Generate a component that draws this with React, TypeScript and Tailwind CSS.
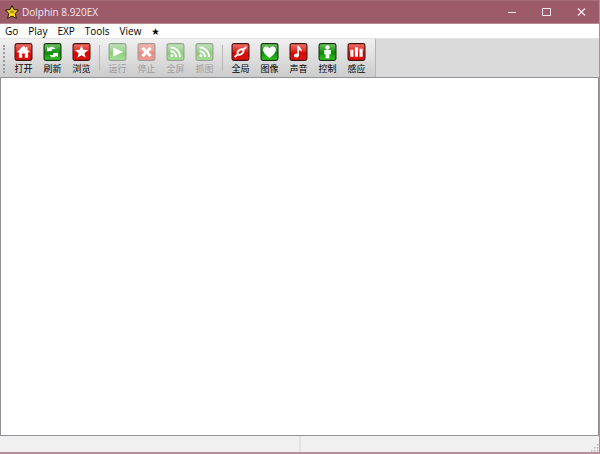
import { useState } from "react";
import type { ReactNode } from "react";

type Glyph =
  | "home"
  | "refresh"
  | "star"
  | "play"
  | "cross"
  | "feed"
  | "planet"
  | "heart"
  | "note"
  | "person"
  | "bars";

interface Tool {
  label: string;
  glyph: Glyph;
  color: "red" | "green";
  disabled?: boolean;
}

const MENUS = ["Go", "Play", "EXP", "Tools", "View"];

const TOOL_GROUPS: Tool[][] = [
  [
    { label: "打开", glyph: "home", color: "red" },
    { label: "刷新", glyph: "refresh", color: "green" },
    { label: "浏览", glyph: "star", color: "red" },
  ],
  [
    { label: "运行", glyph: "play", color: "green", disabled: true },
    { label: "停止", glyph: "cross", color: "red", disabled: true },
    { label: "全屏", glyph: "feed", color: "green", disabled: true },
    { label: "抓图", glyph: "feed", color: "green", disabled: true },
  ],
  [
    { label: "全局", glyph: "planet", color: "red" },
    { label: "图像", glyph: "heart", color: "green" },
    { label: "声音", glyph: "note", color: "red" },
    { label: "控制", glyph: "person", color: "green" },
    { label: "感应", glyph: "bars", color: "red" },
  ],
];

// Top, middle, lower middle and bottom of each tile, then its outline
const TILE_COLORS = {
  red: ["#f0766c", "#e3251f", "#d80500", "#e01410", "#4a1210"],
  green: ["#7cc46c", "#1d9418", "#088a04", "#3cc828", "#12380e"],
  redOff: ["#f2b4ae", "#ee9a94", "#ec8882", "#f09a96", "#a89694"],
  greenOff: ["#c4e2bc", "#9cd090", "#8ccc7c", "#a8e298", "#94a490"],
};

// White glyphs on a 19x19 tile
const GLYPHS: Record<Glyph, ReactNode> = {
  home: <path d="M9.5 3 2.300 9.800h2.300V15.500h3.500v-4.300h2.800v4.300h3.500V9.800h2.300L13.700 7V4.200H12v1.200z" />,
  refresh: (
    <>
      <path d="M3.500 8.800 4 4l1.600 1.200C8.400 3 11.300 3.600 12.600 6.600 10.800 5.900 9.300 6.200 8 7.200l1.500 1.300z" />
      <path d="m15.500 10.200-.5 4.800-1.600-1.200c-2.800 2.200-5.700 1.600-7-1.400 1.800.7 3.300.4 4.600-.6l-1.500-1.300z" />
    </>
  ),
  star: <path d="m9.5 2.500 1.900 4.700 5.100.3-3.900 3.200 1.300 4.900-4.400-2.800-4.400 2.800 1.300-4.900-3.900-3.200 5.100-.3z" />,
  play: <path d="M5 4.800v9.400l10.500-4.700z" />,
  cross: <path d="m4 6.400 2.400-2.400 3.100 3.100L12.600 4 15 6.400l-3.100 3.100 3.100 3.100-2.400 2.400-3.100-3.100L6.400 15 4 12.600l3.100-3.100z" />,
  feed: (
    <>
      <circle cx="5.800" cy="13.300" r="1.600" />
      <path
        d="M4.300 8.800a6 6 0 0 1 6 6M4.300 4.800a10 10 0 0 1 10 10"
        fill="none"
        stroke="#fff"
        strokeWidth="2.200"
      />
    </>
  ),
  planet: (
    <g fill="none" stroke="#fff" strokeWidth="2" transform="rotate(-38 9.5 9.5)">
      <ellipse cx="9.5" cy="9.5" rx="3.500" ry="2.300" />
      <path d="M1.500 9.800H6M13 9.200h4.500" />
    </g>
  ),
  heart: (
    <path d="M9.5 15.800C6.300 13 2.800 10.500 2.800 7c0-3.500 4.700-4.700 6.700-1.400C11.500 2.300 16.200 3.500 16.200 7c0 3.500-3.500 6-6.700 8.800z" />
  ),
  note: (
    <>
      <ellipse cx="7.300" cy="13.200" rx="2.600" ry="2" />
      <path d="M8.300 3H10c.3 2 3.500 2.800 3 6.500-.7-1.500-1.700-2-3-2.100v6H8.300z" />
    </>
  ),
  person: (
    <>
      <circle cx="9.500" cy="4.800" r="2.300" />
      <path d="M6 7.500h7v4.300h-1.500V16h-4v-4.200H6z" />
    </>
  ),
  bars: <path d="M3 7h3.300v7.500H3zM7.800 4.500h3.300v10H7.800zM12.600 6H16v8.500h-3.400z" />,
};

function ToolIcon({ glyph, tile }: { glyph: Glyph; tile: keyof typeof TILE_COLORS }) {
  const [top, middle, lower, bottom, outline] = TILE_COLORS[tile];
  const id = `tile-${tile}`;
  return (
    <svg viewBox="0 0 19 19" className="size-[19px]" aria-hidden="true">
      <defs>
        <linearGradient id={id} x1="0" y1="0" x2="0" y2="1">
          <stop offset="0" stopColor={top} />
          <stop offset="0.45" stopColor={middle} />
          <stop offset="0.55" stopColor={lower} />
          <stop offset="1" stopColor={bottom} />
        </linearGradient>
      </defs>
      <rect
        x="0.6"
        y="0.6"
        width="17.8"
        height="17.8"
        rx="2"
        fill={`url(#${id})`}
        stroke={outline}
        strokeWidth="1.2"
      />
      <g fill="#fff">{GLYPHS[glyph]}</g>
    </svg>
  );
}

function AppStar() {
  return (
    <svg viewBox="0 0 14 14" className="size-[14px]" aria-hidden="true">
      <path
        d="m7 .7 1.900 3.900 4.600.4-3.300 3.500 1.200 4.800L7 11.200l-4.400 2.100 1.200-4.800L.5 5l4.600-.4z"
        fill="#f8d820"
        stroke="#2a1a08"
        strokeLinejoin="round"
      />
      <path d="M6 5.800v2M8 5.800v2" stroke="#2a1a08" strokeWidth="0.8" />
    </svg>
  );
}

function TitleBar() {
  const button = "flex h-full w-[35px] items-center justify-center hover:bg-white/20";
  return (
    <header className="flex h-6 shrink-0 items-center border-t border-b border-t-[#a96c7a] border-b-[#b98893] bg-[#9d5b6a] pl-[5px] text-[#f3e8eb]">
      <AppStar />
      <h1 className="ml-[3px] flex-1 text-[10px]">Dolphin 8.920EX</h1>
      <button type="button" aria-label="Minimize" className={button}>
        <svg viewBox="0 0 9 9" className="size-[9px]" stroke="currentColor">
          <path d="M1 4.500h8" />
        </svg>
      </button>
      <button type="button" aria-label="Maximize" className={button}>
        <svg viewBox="0 0 9 9" className="size-[9px]" fill="none" stroke="currentColor">
          <path d="M.5.5h8v7h-8z" />
        </svg>
      </button>
      <button type="button" aria-label="Close" className={button}>
        <svg viewBox="0 0 9 9" className="size-[9px]" stroke="currentColor" strokeWidth="1.2">
          <path d="m1 .5 7 7m0-7-7 7" />
        </svg>
      </button>
    </header>
  );
}

function MenuBar() {
  return (
    <nav className="flex h-[14px] shrink-0 items-center bg-white text-[10px] leading-[14px] text-black">
      {MENUS.map((menu) => (
        <button key={menu} type="button" className="px-[5px] hover:bg-sky-100">
          {menu}
        </button>
      ))}
      <button type="button" className="px-[5px] text-[8px] hover:bg-sky-100">
        ★
      </button>
    </nav>
  );
}

function ToolBar({ onRun }: { onRun: (label: string) => void }) {
  return (
    <div className="flex h-10 shrink-0 border-t border-b border-t-[#e4e4e4] border-b-[#8f9296] bg-[#dadada]">
      <div className="flex border-r border-[#b4b4b4] bg-linear-to-b from-[#f0f0f0] to-[#cccccc] pr-1">
        <div className="mt-1.5 mr-1 mb-1 ml-[3px] w-0.5 border-l-2 border-dotted border-[#9a9a9a]" />
        {TOOL_GROUPS.map((tools, i) => (
          <div key={i} className="flex">
            {i > 0 && <div className="mx-[3px] mt-1.5 mb-1.5 w-px bg-[#b8b8b8]" />}
            {tools.map((tool) => (
              <button
                key={tool.label}
                type="button"
                disabled={tool.disabled}
                onClick={() => onRun(tool.label)}
                className="flex w-[29px] flex-col items-center pt-1 text-[9px] leading-4 text-black disabled:text-[#9c9c9c]"
              >
                <ToolIcon
                  glyph={tool.glyph}
                  tile={tool.disabled ? (tool.color === "red" ? "redOff" : "greenOff") : tool.color}
                />
                {tool.label}
              </button>
            ))}
          </div>
        ))}
      </div>
    </div>
  );
}

function StatusBar() {
  return (
    <footer className="flex h-4 shrink-0 bg-[#f0f0f0]">
      <div className="flex-1 border-r-2 border-[#e2e2e2]" />
      <div className="flex flex-1 items-end justify-end">
        <svg viewBox="0 0 8 8" className="size-2" fill="#b8b8b8" aria-hidden="true">
          <path d="M6 0h1.500v1.500H6zM3 3h1.500v1.500H3zM6 3h1.500v1.500H6zM0 6h1.500v1.500H0zM3 6h1.500v1.500H3zM6 6h1.500v1.500H6z" />
        </svg>
      </div>
    </footer>
  );
}

export default function App() {
  const [, setLastTool] = useState("");

  return (
    <div className="flex min-h-screen flex-col border-r border-b-2 border-r-[#b58c96] border-b-[#b88f99] bg-white font-['Open_Sans','Noto_Sans_CJK_SC',sans-serif]">
      <TitleBar />
      <MenuBar />
      <ToolBar onRun={setLastTool} />
      <main className="flex-1 border-r border-b border-l border-[#8f9296] bg-white" />
      <StatusBar />
    </div>
  );
}
